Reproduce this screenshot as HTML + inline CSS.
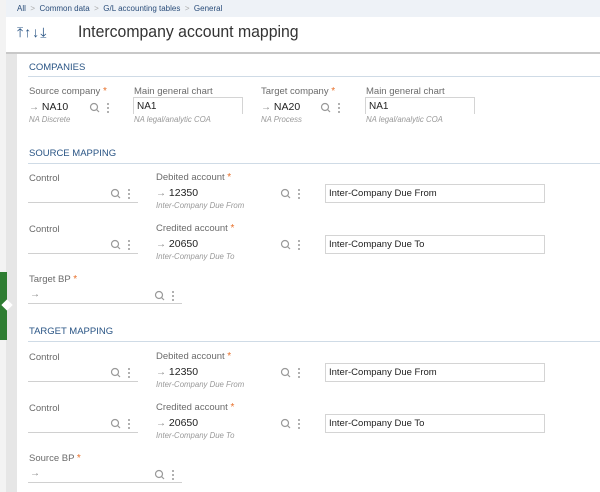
<!DOCTYPE html>
<html><head><meta charset="utf-8"><style>
*{margin:0;padding:0;box-sizing:border-box}
body{width:600px;height:492px;overflow:hidden;background:#fff;font-family:"Liberation Sans",sans-serif;position:relative;color:#333}
.a{position:absolute;white-space:nowrap}
.lbl{font-size:9.5px;color:#6b6b6b}
.star{color:#e8702a;font-size:10px}
.val{font-size:10.5px;color:#222}
.arr{color:#888;font-size:10px}
.desc{font-size:7.8px;color:#999;font-style:italic}
.sec{font-size:9.5px;color:#2a5585}
.hr{position:absolute;height:1px;background:#cfdbe6;left:28px;right:0}
.ul{position:absolute;height:1px;background:#d0d0d0}
.box{position:absolute;border:1px solid #d4d4d4;border-bottom:none;font-size:10px;color:#222;padding:3px 0 0 3px;height:17px}
.box2{position:absolute;border:1px solid #d4d4d4;font-size:9.5px;color:#222;padding:3px 0 0 3px;height:19px}
</style></head><body>
<div class="a" style="left:0;top:0;width:6px;height:492px;background-image:radial-gradient(#cfcfcf 0.6px,transparent 0.7px);background-size:2px 2px"></div>
<div class="a" style="left:6px;top:0;width:594px;height:17px;background:#eef2f7"></div>
<div class="a" style="left:17px;top:4px;font-size:8px;color:#2a4d7a">All &nbsp;<span style="color:#aaa">&gt;</span>&nbsp; Common data &nbsp;<span style="color:#aaa">&gt;</span>&nbsp; G/L accounting tables &nbsp;<span style="color:#aaa">&gt;</span>&nbsp; General</div>
<div class="a" style="left:17px;top:24px;font-size:14px;color:#2a5585;letter-spacing:1px">⤒↑↓⤓</div>
<div class="a" style="left:78px;top:22px;font-size:17px;color:#333;transform:scaleX(0.93);transform-origin:left">Intercompany account mapping</div>
<div class="a" style="left:6px;top:52px;width:594px;height:2px;background:#c8c8c8"></div>
<div class="a" style="left:6px;top:54px;width:11px;height:438px;background:#e6e6e6"></div>
<div class="a" style="left:0;top:272px;width:7px;height:68px;background:#2e7d32"></div>
<div class="a" style="left:3px;top:301px;width:8px;height:8px;background:#fff;transform:rotate(45deg)"></div>

<div class="a sec" style="left:29px;top:62px">COMPANIES</div>
<div class="hr" style="top:76px"></div>
<div class="a lbl" style="left:29px;top:86px">Source company <span class="star">*</span></div>
<div class="a val" style="left:29px;top:101px"><span class="arr">→</span> NA10</div>
<div class="a desc" style="left:29px;top:115px">NA Discrete</div>
<div class="a" style="left:89px;top:101px"><svg width="26" height="12"><circle cx="5" cy="5" r="3.5" fill="none" stroke="#999" stroke-width="1.2"/><path d="M7.5 7.5L10 10" stroke="#999" stroke-width="1.2"/><circle cx="19" cy="2" r="1" fill="#999"/><circle cx="19" cy="6" r="1" fill="#999"/><circle cx="19" cy="10" r="1" fill="#999"/></svg></div>
<div class="a lbl" style="left:134px;top:86px">Main general chart</div>
<div class="box" style="left:133px;top:97px;width:110px">NA1</div>
<div class="a desc" style="left:134px;top:115px">NA legal/analytic COA</div>
<div class="a lbl" style="left:261px;top:86px">Target company <span class="star">*</span></div>
<div class="a val" style="left:261px;top:101px"><span class="arr">→</span> NA20</div>
<div class="a desc" style="left:261px;top:115px">NA Process</div>
<div class="a" style="left:320px;top:101px"><svg width="26" height="12"><circle cx="5" cy="5" r="3.5" fill="none" stroke="#999" stroke-width="1.2"/><path d="M7.5 7.5L10 10" stroke="#999" stroke-width="1.2"/><circle cx="19" cy="2" r="1" fill="#999"/><circle cx="19" cy="6" r="1" fill="#999"/><circle cx="19" cy="10" r="1" fill="#999"/></svg></div>
<div class="a lbl" style="left:366px;top:86px">Main general chart</div>
<div class="box" style="left:365px;top:97px;width:110px">NA1</div>
<div class="a desc" style="left:366px;top:115px">NA legal/analytic COA</div>

<div class="a sec" style="left:29px;top:148px">SOURCE MAPPING</div>
<div class="hr" style="top:163px"></div>

<div class="a sec" style="left:29px;top:326px">TARGET MAPPING</div>
<div class="hr" style="top:341px"></div>

<script>
function ic(x,y){return '<div class="a" style="left:'+x+'px;top:'+y+'px"><svg width="26" height="12"><circle cx="5" cy="5" r="3.5" fill="none" stroke="#999" stroke-width="1.2"/><path d="M7.5 7.5L10 10" stroke="#999" stroke-width="1.2"/><circle cx="19" cy="2" r="1" fill="#999"/><circle cx="19" cy="6" r="1" fill="#999"/><circle cx="19" cy="10" r="1" fill="#999"/></svg></div>';}
function block(o,bp){
 var h='';
 [[0,'Debited account','12350','Inter-Company Due From'],[51,'Credited account','20650','Inter-Company Due To']].forEach(function(r){
  var y=o+r[0];
  h+='<div class="a lbl" style="left:29px;top:'+(y+173)+'px">Control</div>';
  h+=ic(110,y+187);
  h+='<div class="ul" style="left:28px;top:'+(y+202)+'px;width:110px"></div>';
  h+='<div class="a lbl" style="left:156px;top:'+(y+172)+'px">'+r[1]+' <span class="star">*</span></div>';
  h+='<div class="a val" style="left:156px;top:'+(y+187)+'px"><span class="arr">→</span> '+r[2]+'</div>';
  h+='<div class="a desc" style="left:156px;top:'+(y+201)+'px">'+r[3]+'</div>';
  h+=ic(280,y+187);
  h+='<div class="box2" style="left:325px;top:'+(y+184)+'px;width:220px">'+r[3]+'</div>';
 });
 h+='<div class="a lbl" style="left:29px;top:'+(o+274)+'px">'+bp+' <span class="star">*</span></div>';
 h+='<div class="a arr" style="left:30px;top:'+(o+289)+'px">→</div>';
 h+=ic(154,o+289);
 h+='<div class="ul" style="left:28px;top:'+(o+303)+'px;width:154px"></div>';
 return h;
}
document.body.insertAdjacentHTML('beforeend',block(0,'Target BP')+block(179,'Source BP'));
</script>
</body></html>
